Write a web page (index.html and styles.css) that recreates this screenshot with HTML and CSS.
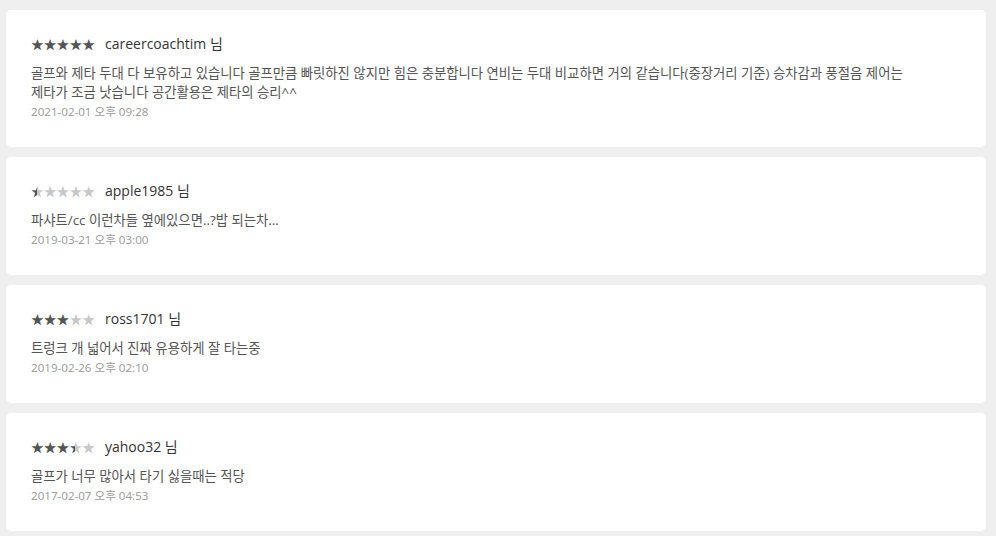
FILE: index.html
```html
<!DOCTYPE html>
<html lang="ko">
<head>
    <meta charset="UTF-8">
    <meta name="viewport" content="width=device-width, initial-scale=1.0">
    <title>리뷰</title>
    <link rel="stylesheet" href="styles.css">
</head>
<body>
    <main class="review-list">

        <div class="review-card">
            <div class="review-head">
                <span class="stars"><span class="star on">★</span><span class="star on">★</span><span class="star on">★</span><span class="star on">★</span><span class="star on">★</span></span>
                <span class="user">careercoachtim 님</span>
            </div>
            <p class="review-text">골프와 제타 두대 다 보유하고 있습니다 골프만큼 빠릿하진 않지만 힘은 충분합니다 연비는 두대 비교하면 거의 같습니다(중장거리 기준) 승차감과 풍절음 제어는<br>제타가 조금 낫습니다 공간활용은 제타의 승리^^</p>
            <div class="review-date">2021-02-01 오후 09:28</div>
        </div>

        <div class="review-card">
            <div class="review-head">
                <span class="stars"><span class="star half">★</span><span class="star">★</span><span class="star">★</span><span class="star">★</span><span class="star">★</span></span>
                <span class="user">apple1985 님</span>
            </div>
            <p class="review-text">파샤트/cc 이런차들 옆에있으면..?밥 되는차...</p>
            <div class="review-date">2019-03-21 오후 03:00</div>
        </div>

        <div class="review-card">
            <div class="review-head">
                <span class="stars"><span class="star on">★</span><span class="star on">★</span><span class="star on">★</span><span class="star">★</span><span class="star">★</span></span>
                <span class="user">ross1701 님</span>
            </div>
            <p class="review-text">트렁크 개 넓어서 진짜 유용하게 잘 타는중</p>
            <div class="review-date">2019-02-26 오후 02:10</div>
        </div>

        <div class="review-card">
            <div class="review-head">
                <span class="stars"><span class="star on">★</span><span class="star on">★</span><span class="star on">★</span><span class="star half">★</span><span class="star">★</span></span>
                <span class="user">yahoo32 님</span>
            </div>
            <p class="review-text">골프가 너무 많아서 타기 싫을때는 적당</p>
            <div class="review-date">2017-02-07 오후 04:53</div>
        </div>

    </main>
</body>
</html>
```

FILE: styles.css
```css
body {
    margin: 0;
    padding: 0;
    background-color: #efefef;
    font-family: "Open Sans", "Noto Sans CJK KR", sans-serif;
}

.review-list {
    display: flex;
    flex-direction: column;
    gap: 10px;
    padding: 10px 10px 0 6px;
}

.review-card {
    background-color: #fff;
    border-radius: 5px;
    padding: 25px 25px 26px 25px;
}

.review-head {
    display: flex;
    align-items: center;
    height: 18px;
}

/* rating stars */
.stars {
    display: inline-flex;
    font-family: "Noto Sans CJK KR", sans-serif;
    font-size: 12.8px;
    line-height: 18px;
    margin-right: 10px;
}

.star {
    color: #c8c8c8;
}

.star.on {
    color: #555;
}

.star.half {
    background: linear-gradient(90deg, #555 50%, #c8c8c8 50%);
    -webkit-background-clip: text;
    background-clip: text;
    color: transparent;
}

.user {
    font-size: 14px;
    color: #333;
    line-height: 18px;
}

.review-text {
    margin: 11px 0 1px 0;
    font-size: 13.35px;
    line-height: 19px;
    color: #555;
}

.review-date {
    font-size: 11.6px;
    line-height: 18px;
    color: #999;
}
```
